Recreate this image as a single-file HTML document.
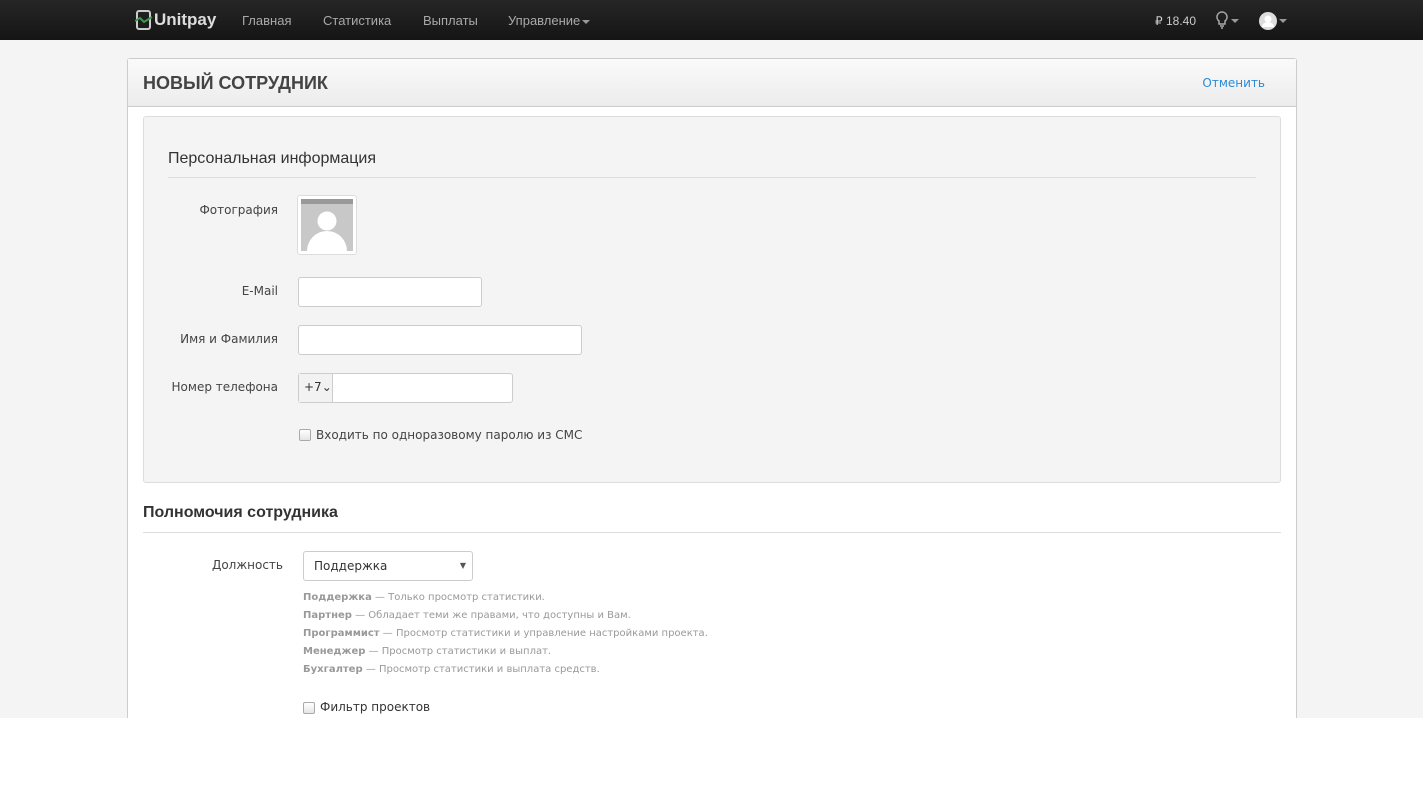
<!DOCTYPE html>
<html><head><meta charset="utf-8"><style>
*{box-sizing:border-box;margin:0;padding:0}
body{width:1423px;height:806px;background:#fff;font-family:"DejaVu Sans",Verdana,sans-serif;font-size:12px;color:#333;position:relative;overflow:hidden}
.bg{position:absolute;left:0;top:0;width:1423px;height:718px;background:#f4f4f4}
.nav{position:absolute;left:0;top:0;width:1423px;height:40px;background:linear-gradient(#262626,#151515);}
.nav span{position:absolute;top:13px;color:#a9a9a9;font-family:"Liberation Sans",Arial,sans-serif;font-size:13px}
.caret{display:inline-block;width:0;height:0;border-left:4px solid transparent;border-right:4px solid transparent;border-top:4px solid #999;vertical-align:middle;margin-left:2px}
.panel{position:absolute;left:127px;top:58px;width:1170px;height:700px;background:#fff;border:1px solid #ccc;border-radius:3px}
.hdr{height:48px;background:linear-gradient(#fafafa,#ececec);border-bottom:1px solid #ccc;position:relative}
.hdr h1{position:absolute;left:15px;top:14px;font-family:"Liberation Sans",Arial,sans-serif;font-size:18px;font-weight:bold;color:#444}
.hdr a{position:absolute;right:31px;top:17px;color:#2a8ad4;font-size:12px}
.well{position:absolute;left:15px;top:57px;width:1138px;height:367px;background:#f4f4f4;border:1px solid #ddd;border-radius:3px}
.lbl{position:absolute;text-align:right;color:#444}
.inp{position:absolute;background:#fff;border:1px solid #ccc;border-radius:3px;height:30px}
.cb{position:absolute;width:12px;height:12px;border:1px solid #aaa;border-radius:2px;background:linear-gradient(#fff,#e5e5e5)}
.desc{position:absolute;left:175px;font-size:10px;color:#999}
.desc b{color:#999}
</style></head><body>
<div class="bg"></div>
<div class="nav">
<svg style="position:absolute;left:135px;top:10px" width="18" height="20" viewBox="0 0 18 20"><rect x="2" y="1" width="13" height="18" rx="2" fill="none" stroke="#ccc" stroke-width="2"/><path d="M0 11 L5 8 L9 12 L17 7" stroke="#3a9a4a" stroke-width="2" fill="none"/></svg>
<span style="left:154px;top:10px;color:#ddd;font-weight:bold;font-size:17px">Unitpay</span>
<span style="left:242px">Главная</span>
<span style="left:323px">Статистика</span>
<span style="left:423px">Выплаты</span>
<span style="left:508px">Управление<i class="caret"></i></span>
<span style="left:1155px;color:#ccc;font-size:12px;top:14px">₽ 18.40</span>
<svg style="position:absolute;left:1216px;top:11px" width="12" height="18" viewBox="0 0 12 18"><path d="M6 1a5 5 0 0 0-3 9v3h6v-3a5 5 0 0 0-3-9z" fill="none" stroke="#aaa" stroke-width="1.5"/><path d="M4 15h4M5 17h2" stroke="#aaa" stroke-width="1.5"/></svg>
<i class="caret" style="position:absolute;left:1229px;top:19px"></i>
<svg style="position:absolute;left:1259px;top:12px" width="18" height="18" viewBox="0 0 18 18"><circle cx="9" cy="9" r="9" fill="#ddd"/><circle cx="9" cy="7" r="3.5" fill="#fff"/><path d="M3 15a6 5 0 0 1 12 0z" fill="#fff"/></svg>
<i class="caret" style="position:absolute;left:1277px;top:19px"></i>
</div>
<div class="panel">
<div class="hdr"><h1>НОВЫЙ СОТРУДНИК</h1><a>Отменить</a></div>
<div class="well">
<div style="position:absolute;left:24px;top:33px;font-family:'Liberation Sans',Arial,sans-serif;font-size:16px;color:#333">Персональная информация</div>
<div style="position:absolute;left:24px;top:60px;width:1088px;border-top:1px solid #ddd"></div>
<div class="lbl" style="left:0;width:134px;top:86px">Фотография</div>
<div style="position:absolute;left:153px;top:78px;width:60px;height:60px;background:#fff;border:1px solid #ddd;border-radius:3px;padding:3px">
<svg width="52" height="52" viewBox="0 0 52 52"><rect width="52" height="52" fill="#c8c8c8"/><rect width="52" height="5" fill="#999"/><circle cx="26" cy="22" r="9.5" fill="#fff"/><path d="M6 52a20 20 0 0 1 40 0z" fill="#fff"/></svg></div>
<div class="lbl" style="left:0;width:134px;top:167px">E-Mail</div>
<div class="inp" style="left:154px;top:160px;width:184px"></div>
<div class="lbl" style="left:0;width:134px;top:215px">Имя и Фамилия</div>
<div class="inp" style="left:154px;top:208px;width:284px"></div>
<div class="lbl" style="left:0;width:134px;top:263px">Номер телефона</div>
<div class="inp" style="left:154px;top:256px;width:215px"><div style="position:absolute;left:0;top:0;width:34px;height:28px;background:#f2f2f2;border-right:1px solid #ccc;padding:6px 0 0 5px;font-size:12px">+7⌄</div></div>
<div class="cb" style="left:155px;top:312px"></div>
<div style="position:absolute;left:172px;top:311px;color:#444">Входить по одноразовому паролю из СМС</div>
</div>
<div style="position:absolute;left:15px;top:445px;font-family:'Liberation Sans',Arial,sans-serif;font-size:16px;font-weight:bold;color:#333">Полномочия сотрудника</div>
<div style="position:absolute;left:15px;top:473px;width:1138px;border-top:1px solid #ddd"></div>
<div class="lbl" style="left:0;width:155px;top:499px">Должность</div>
<div class="inp" style="left:175px;top:492px;width:170px;padding:7px 10px;font-size:12px">Поддержка<span style="position:absolute;right:6px;top:9px;font-size:8px;color:#555">▼</span></div>
<div class="desc" style="top:533px"><b>Поддержка</b> — Только просмотр статистики.</div>
<div class="desc" style="top:551px"><b>Партнер</b> — Обладает теми же правами, что доступны и Вам.</div>
<div class="desc" style="top:569px"><b>Программист</b> — Просмотр статистики и управление настройками проекта.</div>
<div class="desc" style="top:587px"><b>Менеджер</b> — Просмотр статистики и выплат.</div>
<div class="desc" style="top:605px"><b>Бухгалтер</b> — Просмотр статистики и выплата средств.</div>
<div class="cb" style="left:175px;top:643px"></div>
<div style="position:absolute;left:192px;top:641px;color:#333;font-size:12px">Фильтр проектов</div>
</div>
<div style="position:absolute;left:0;top:718px;width:1423px;height:88px;background:#fff"></div>
</body></html>
